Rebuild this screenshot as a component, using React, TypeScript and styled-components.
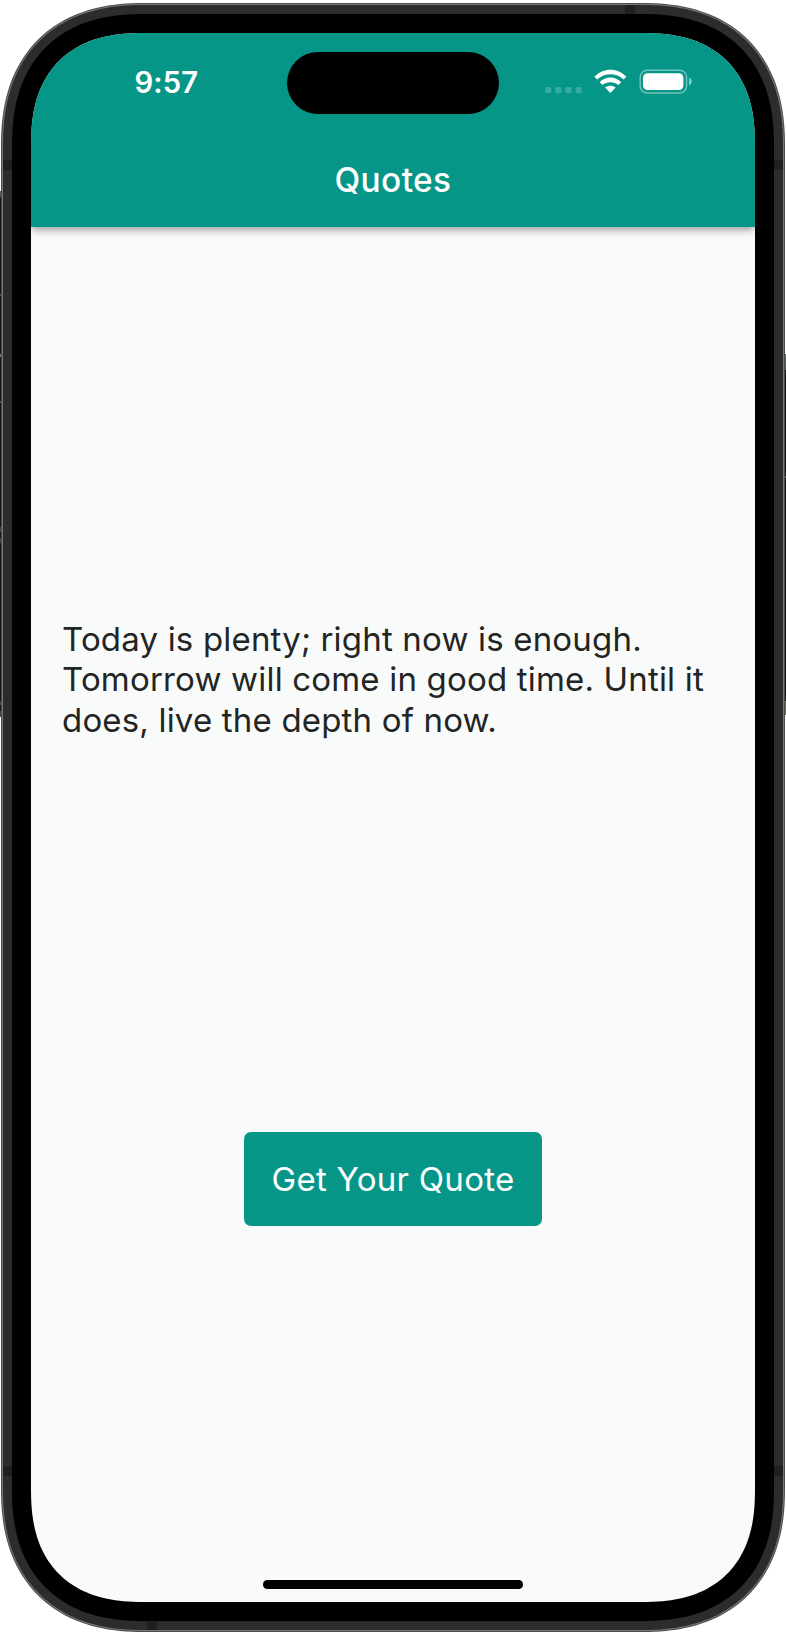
import React from "react";
import styled, { createGlobalStyle } from "styled-components";

const GlobalStyle = createGlobalStyle`
  * { box-sizing: border-box; }
  html, body { margin: 0; background: #fff; }
  body { font-family: Inter, "Liberation Sans", sans-serif; }
`;

const TEAL = "#069687";

/* Superellipse-cornered outline; `offset` is the distance outside the screen edge. */
function squircle(w: number, h: number, offset: number): string {
  const extent = 115 + offset;
  const mid = 28 + 0.293 * offset;
  const n = -Math.LN2 / Math.log(1 - mid / extent);
  const steps = 48;
  /* Top-left corner, from the top edge down to the left edge. */
  const corner = Array.from({ length: steps + 1 }, (_, i) => {
    const t = (i / steps) * (Math.PI / 2);
    return [
      extent * (1 - Math.pow(Math.abs(Math.sin(t)), 2 / n)),
      extent * (1 - Math.pow(Math.abs(Math.cos(t)), 2 / n)),
    ];
  }).map(([x, y]) => [y, x]);
  const reversed = [...corner].reverse();
  const startsAtTop = corner[0][1] < corner[steps][1];
  const down = startsAtTop ? corner : reversed;
  const up = startsAtTop ? reversed : corner;
  const points = [
    ...up,
    ...down.map(([x, y]) => [w - x, y]),
    ...up.map(([x, y]) => [w - x, h - y]),
    ...down.map(([x, y]) => [x, h - y]),
  ];
  return `polygon(${points.map(([x, y]) => `${x.toFixed(2)}px ${y.toFixed(2)}px`).join(", ")})`;
}

const Stage = styled.main`
  width: 786px;
  height: 1634px;
  padding: 3px 0 2px;
  display: grid;
  grid-template-columns: 1px 784px 1px;
  overflow: hidden;
`;

const Shell = styled.div<{ $w: number; $h: number; $offset: number }>`
  width: ${(p) => p.$w}px;
  height: ${(p) => p.$h}px;
  padding: 1px;
  clip-path: ${(p) => squircle(p.$w, p.$h, p.$offset)};
`;

const OuterEdge = styled(Shell)`
  background: #4c4d4d;
`;

const Highlight = styled(Shell)`
  background: #777;
`;

/* Metal band with its antenna breaks. */
const Frame = styled(Shell)`
  padding: 9px;
  background:
    linear-gradient(#1f1f1f, #1f1f1f) 622px 0 / 10px 9px no-repeat,
    linear-gradient(#1f1f1f, #1f1f1f) 144px 100% / 10px 9px no-repeat,
    linear-gradient(#1f1f1f, #1f1f1f) 0 155px / 100% 10px no-repeat,
    linear-gradient(#1f1f1f, #1f1f1f) 0 1461px / 100% 10px no-repeat,
    #2c2c2c;
`;

const Bezel = styled(Shell)`
  padding: 19px;
  background: #000;
`;

const LeftKeys = styled.div`
  height: 526px;
  margin-top: 188px;
  background: linear-gradient(
    #555958 0 6px, #151515 6px 103px, #555 103px 105px, #151515 105px 163px,
    #777 163px 166px, #151515 166px 210px, #555 210px 212px, #151515 212px 336px,
    #474b36 336px 341px, #151515 341px 347px, #474b36 347px 352px, #151515 352px 510px,
    #474b36 510px 514px, #151515 514px 520px, #474b36 520px
  );
`;

const RightKey = styled.div`
  height: 361px;
  margin-top: 351px;
  background: linear-gradient(
    #5b5f5e 0 16px, #151515 16px 122px, #555 122px 124px, #151515 124px 347px, #6b705c 347px
  );
`;

const Screen = styled(Shell)`
  padding: 0;
  display: flex;
  flex-direction: column;
  background: #f9fbfa;
`;

const AppBar = styled.header`
  flex: none;
  height: 193.5px;
  background: ${TEAL};
  color: #fff;
  box-shadow: 0 3px 7px -1px rgba(0, 0, 0, 0.3), 0 6px 8px rgba(0, 0, 0, 0.07),
    0 1px 12px rgba(0, 0, 0, 0.06);
`;

const StatusBar = styled.div`
  height: 99px;
  display: grid;
  grid-template-columns: 256px 212px 1fr;
`;

const Clock = styled.time`
  padding: 32px 0 0 103.5px;
  font-size: 29.2px;
  line-height: 35px;
  font-weight: 600;
  letter-spacing: 0.1px;
`;

const Island = styled.div`
  height: 62px;
  margin-top: 19px;
  border-radius: 31px;
  background: #000;
`;

const StatusIcons = styled.div`
  padding: 36px 0 0 46px;

  svg { display: block; }
`;

const Title = styled.h1`
  margin: 0;
  padding-top: 28px;
  font-size: 33.4px;
  line-height: 40px;
  font-weight: 500;
  letter-spacing: 0.4px;
  text-align: center;
`;

const Content = styled.section`
  flex: 1;
  padding: 392.5px 31px 13.5px;
  display: flex;
  flex-direction: column;
  align-items: center;
  gap: 392px;
`;

const Quote = styled.p`
  align-self: stretch;
  margin: 0;
  color: #232524;
  font-size: 33px;
  line-height: 40.3px;
  letter-spacing: 0.18px;
  white-space: nowrap;
`;

const Actions = styled.div`
  flex: 1;
  display: flex;
  flex-direction: column;
  align-items: center;
  justify-content: space-between;
`;

const QuoteButton = styled.button`
  width: 298px;
  height: 94.5px;
  padding: 0;
  border: 0;
  border-radius: 7px;
  background: ${TEAL};
  color: #fff;
  font: 400 33px/40px Inter, "Liberation Sans", sans-serif;
  letter-spacing: 0.28px;
`;

const HomeIndicator = styled.div`
  width: 260px;
  height: 8.5px;
  border-radius: 4.25px;
  background: #000;
`;

const StatusGlyphs = () => (
  <svg width="150" height="26" viewBox="545 69 150 26" fill="#fff">
    <g opacity="0.2">
      {[545.2, 555.2, 565.4, 575.6].map((x) => (
        <rect key={x} x={x} y="87" width="6.2" height="6.2" rx="1.6" />
      ))}
    </g>
    <path d="M594.4 76.8C603.1 67.4 617.6 67.4 626.4 76.8L623.7 79.6C616.3 72.4 604.5 72.4 597.1 79.6Z" />
    <path d="M599.6 82.2C605.8 76 615 76 621.2 82.2L618.3 85C613.9 81.2 606.9 81.2 602.5 85Z" />
    <path d="M605.1 87.6C608.3 85.1 612.5 85.1 615.7 87.6L610.9 92.5Q610.4 93 609.9 92.5Z" />
    <rect x="640.2" y="70.2" width="46.4" height="22.8" rx="7" fill="none" stroke="#fff" strokeWidth="1.5" opacity="0.42" />
    <rect x="643" y="73.2" width="40.4" height="16.8" rx="4.6" />
    <path d="M689 77.8C692.8 79 692.8 84.2 689 85.4Z" opacity="0.5" />
  </svg>
);

export default function App() {
  return (
    <>
      <GlobalStyle />
      <Stage>
        <LeftKeys />
        <OuterEdge $w={784} $h={1629} $offset={30}>
          <Highlight $w={782} $h={1627} $offset={29}>
            <Frame $w={780} $h={1625} $offset={28}>
              <Bezel $w={762} $h={1607} $offset={19}>
                <Screen $w={724} $h={1569} $offset={0}>
                  <AppBar>
                    <StatusBar>
                      <Clock>9:57</Clock>
                      <Island />
                      <StatusIcons><StatusGlyphs /></StatusIcons>
                    </StatusBar>
                    <Title>Quotes</Title>
                  </AppBar>
                  <Content>
                    <Quote>
                      Today is plenty; right now is enough.<br />
                      Tomorrow will come in good time. Until it<br />
                      does, live the depth of now.
                    </Quote>
                    <Actions>
                      <QuoteButton>Get Your Quote</QuoteButton>
                      <HomeIndicator />
                    </Actions>
                  </Content>
                </Screen>
              </Bezel>
            </Frame>
          </Highlight>
        </OuterEdge>
        <RightKey />
      </Stage>
    </>
  );
}
